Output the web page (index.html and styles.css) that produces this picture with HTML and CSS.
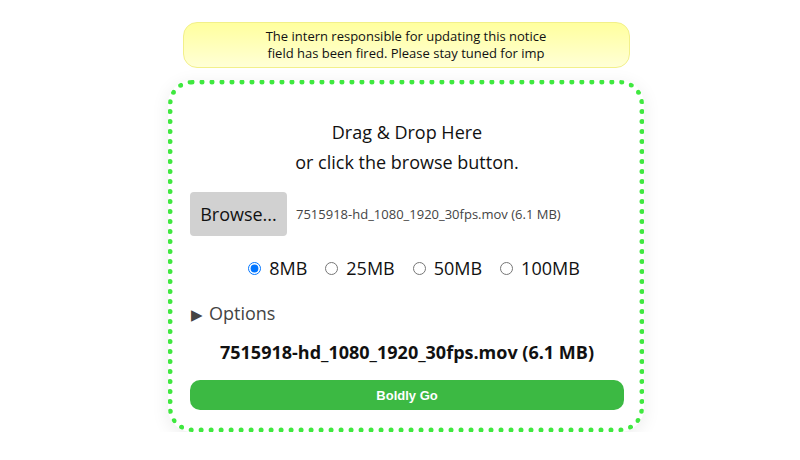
FILE: index.html
```html
<!DOCTYPE html>
<html lang="en">
<head>
<meta charset="utf-8" />
<title>Video Squisher</title>
<link rel="stylesheet" href="styles.css">
</head>
<body>
<div class="page">
  <div class="notice">The intern responsible for updating this notice<br>field has been fired. Please stay tuned for imp</div>
  <div class="dropzone">
    <p class="dropText">Drag &amp; Drop Here<br>or click the browse button.</p>
    <div class="fileRow">
      <button class="browseBtn">Browse...</button>
      <span class="fileName">7515918-hd_1080_1920_30fps.mov (6.1 MB)</span>
    </div>
    <div class="sizes">
      <label><input type="radio" name="size" checked> 8MB</label>
      <label><input type="radio" name="size"> 25MB</label>
      <label><input type="radio" name="size"> 50MB</label>
      <label><input type="radio" name="size"> 100MB</label>
    </div>
    <details class="options">
      <summary>Options</summary>
    </details>
    <div class="chosen">7515918-hd_1080_1920_30fps.mov (6.1 MB)</div>
    <button class="goBtn">Boldly Go</button>
  </div>
</div>
</body>
</html>
```
FILE: styles.css
```css
body {
  margin:0; background:#fff; color:#111;
  font-family: "Open Sans", "Noto Sans", sans-serif;
}
.page {
  width:476px; margin:0 auto; padding:22px 0 0 12px;
  display:flex; flex-direction:column; align-items:center;
}
.notice {
  width:445px; height:44px; box-sizing:content-box;
  background:linear-gradient(#ffff9e,#ffffd6);
  border:1px solid #f2f08a; border-radius:14px;
  font-size:13px; line-height:17px; text-align:center;
  display:flex; align-items:center; justify-content:center;
}
.dropzone {
  width:476px; box-sizing:border-box; margin-top:12px;
  border:5px dotted #3fe83f; border-radius:24px;
  padding:32px 15px 17px 17px;
  box-shadow:0 4px 18px rgba(0,0,0,.08);
  display:flex; flex-direction:column;
}
.dropText {
  margin:0; text-align:center; font-size:18px; line-height:30px;
}
.fileRow {
  display:flex; align-items:center; gap:9px; margin-top:15px;
}
.browseBtn {
  width:97px; height:44px; background:#d1d1d1; border:none; border-radius:4px;
  font-family: inherit; font-size:18px; color:#111; padding:0;
}
.fileName {
  font-size:13px; color:#444;
}
.sizes {
  display:flex; justify-content:center; gap:18px; margin-top:18px;
  font-size:18px; line-height:28px; padding-left:14px;
}
.sizes label {
  display:flex; align-items:center; gap:8px;
}
.sizes input {
  margin:0; width:13px; height:13px;
}
.options {
  margin-top:17px; font-size:18px; line-height:28px; color:#444;
}
.options summary {
  list-style:none; cursor:pointer;
}
.options summary::before {
  content:"\25B6"; font-size:15px; margin-right:6px; margin-left:1px;
}
.chosen {
  margin-top:10px; text-align:center; font-weight:700; font-size:18px; line-height:28px;
}
.goBtn {
  margin-top:14px; height:30px; width:434px; border:none; border-radius:10px;
  background:#3cb943; color:#fff; font-weight:700; font-size:13px;
  font-family: "Liberation Sans", Arial, sans-serif;
}
```
